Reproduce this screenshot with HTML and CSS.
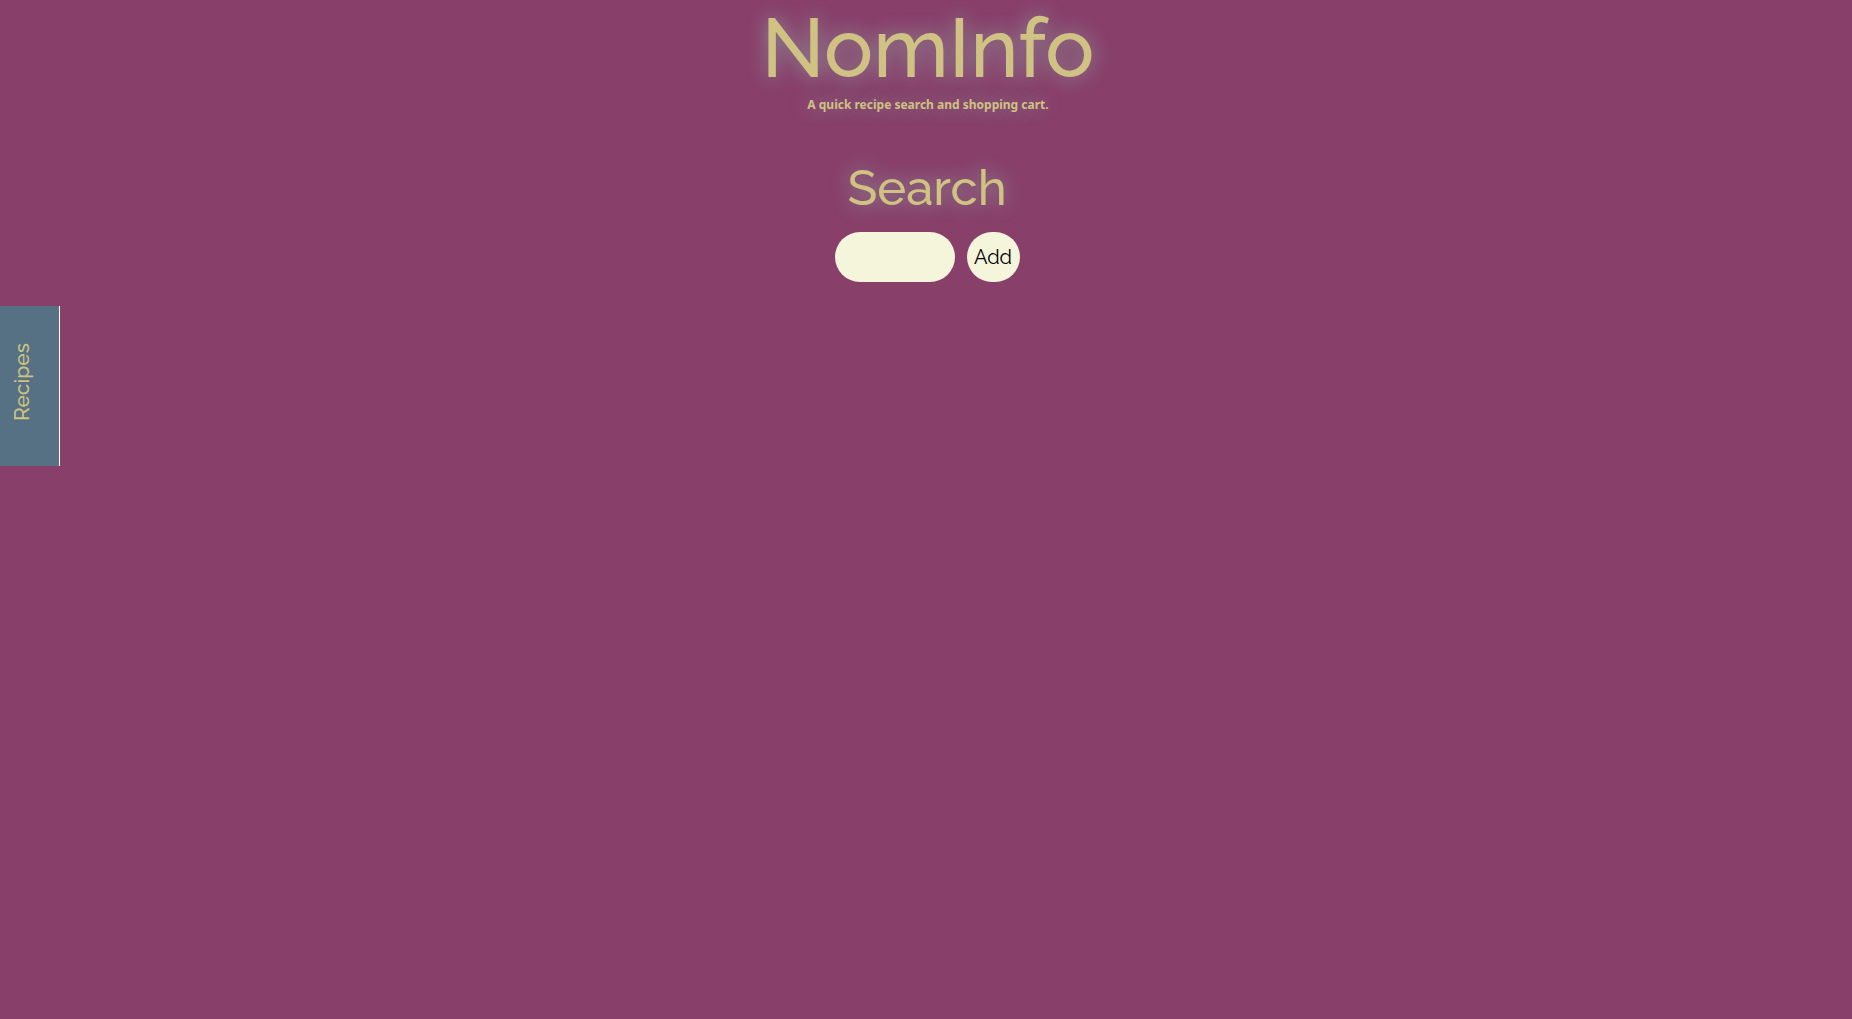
FILE: index.html
```html
<!DOCTYPE html>
<html lang="en">
<head>
<meta charset="utf-8">
<title>NomInfo</title>
<link rel="stylesheet" href="styles.css">
</head>
<body>
<header class="header">
<h1 class="title">NomInfo</h1>
<p class="tagline">A quick recipe search and shopping cart.</p>
</header>
<main>
<form class="search">
<label class="search-label" for="ingredient">Search</label>
<div class="search-row">
<input class="search-input" id="ingredient" type="text">
<button class="search-button" type="button">Add</button>
</div>
</form>
<button class="recipes" type="button"><span class="recipes-text">Recipes</span></button>
</main>
</body>
</html>
```

FILE: styles.css
```css
* { box-sizing: border-box; }
body {
  margin: 0;
  min-height: 100vh;
  background: #883f6a;
  color: #cfc283;
  font-family: Raleway, Lato, sans-serif;
}
.header { padding-left: 4px; text-align: center; text-shadow: 0 0 20px #8f9a9e; }
.title { margin: 0; font-size: 82px; line-height: 96px; font-weight: 500; }
.tagline { margin: 0; font: 700 12px/18px "Noto Sans", sans-serif; }
.search { display: flex; flex-direction: column; align-items: center; padding: 44px 0 0 2px; gap: 14px; }
.search-label { font-size: 49px; line-height: 60px; font-weight: 500; text-shadow: 0 0 20px #8f9a9e; }
.search-row { display: flex; gap: 12px; }
.search-input { width: 120px; height: 50px; padding: 0 16px; border: 0; border-radius: 25px; background: #f5f5dc; font: 20px Raleway, Lato, sans-serif; }
.search-button { width: 53px; height: 50px; padding: 0; border: 0; border-radius: 25px; background: #f5f5dc; color: #000; font: 20px Raleway, Lato, sans-serif; }
.recipes {
  display: flex; align-items: center; justify-content: center;
  width: 60px; height: 160px; margin-top: 24px; padding: 0 16px 8px 0;
  border: 0; border-right: 1px solid #fff;
  background: #557183; color: #cfc283; font: 500 21px Raleway, Lato, sans-serif;
}
.recipes-text { writing-mode: vertical-rl; transform: rotate(180deg); }
```
